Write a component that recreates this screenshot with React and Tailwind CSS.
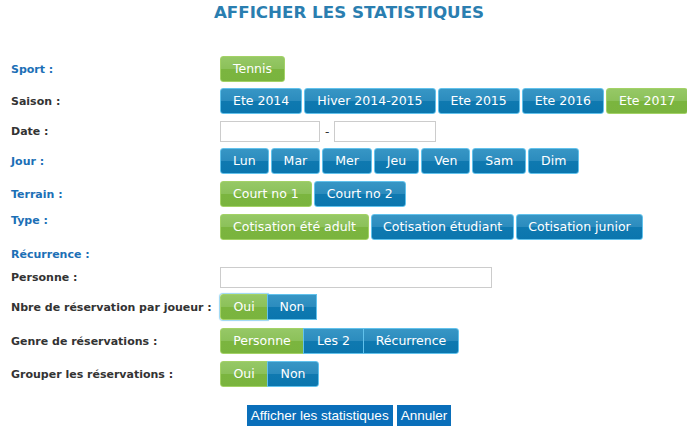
import clsx from 'clsx';
import { twMerge } from 'tailwind-merge';

const blue =
  'border-[#62c2ec] bg-[linear-gradient(to_bottom,#3796c5_0%,#2c8cbe_48%,#0f79b0_52%,#0b76ae_100%)]';
const green =
  'border-[#a3d266] bg-[linear-gradient(to_bottom,#96c866_0%,#8cc15a_48%,#7bb53f_52%,#7ab43e_100%)]';

const Btn = ({ children, active, className }) => (
  <button
    className={twMerge(
      clsx(
        'h-[26px] border px-[12px] text-[12.5px] leading-none text-white whitespace-nowrap',
        active ? green : blue,
        className
      )
    )}
  >
    {children}
  </button>
);

const Row = ({ label, accent, top, className, children }) => (
  <div className={clsx('flex', top ? 'items-start' : 'items-center', className)}>
    <div
      className={clsx(
        'w-[209px] shrink-0 text-[11px] font-bold leading-[13px]',
        accent ? 'text-[#1c6fb6]' : 'text-[#333333]'
      )}
    >
      {label}
    </div>
    <div className="flex items-center">{children}</div>
  </div>
);

const Field = ({ className }) => (
  <input type="text" className={clsx('h-[21px] border border-[#cccccc] bg-white', className)} />
);

export default function App() {
  const saisons = ['Ete 2014', 'Hiver 2014-2015', 'Ete 2015', 'Ete 2016', 'Ete 2017'];
  const jours = ['Lun', 'Mar', 'Mer', 'Jeu', 'Ven', 'Sam', 'Dim'];

  return (
    <div className="w-[687px] h-[433px] bg-white pl-[11px] font-['DejaVu_Sans',Verdana,sans-serif]">
      <h1 className="pt-[3px] text-center text-[16.7px] font-bold leading-[19px] text-[#2a7eb0]">
        AFFICHER LES STATISTIQUES
      </h1>

      <Row label="Sport :" accent className="mt-[34px]">
        <Btn active className="rounded-[3px]">Tennis</Btn>
      </Row>

      <Row label="Saison :" className="mt-[6px]">
        <div className="flex gap-[2px]">
          {saisons.map((s, i) => (
            <Btn key={s} active={i === 4} className="rounded-[3px]">
              {s}
            </Btn>
          ))}
        </div>
      </Row>

      <Row label="Date :" className="mt-[7px]">
        <Field className="w-[100px]" />
        <span className="mx-[5px] text-[12px] text-[#333]">-</span>
        <Field className="w-[102px]" />
      </Row>

      <Row label="Jour :" accent className="mt-[6px]">
        <div className="flex gap-[2px]">
          {jours.map((j) => (
            <Btn key={j} className="rounded-[3px]">
              {j}
            </Btn>
          ))}
        </div>
      </Row>

      <Row label="Terrain :" accent className="mt-[7px]">
        <div className="flex gap-[2px]">
          <Btn active className="rounded-[3px]">Court no 1</Btn>
          <Btn className="rounded-[3px]">Court no 2</Btn>
        </div>
      </Row>

      <Row label="Type :" accent top className="mt-[7px]">
        <div className="flex gap-[2px]">
          <Btn active className="rounded-[3px]">Cotisation été adult</Btn>
          <Btn className="rounded-[3px] px-[11px]">Cotisation étudiant</Btn>
          <Btn className="rounded-[3px] px-[11px]">Cotisation junior</Btn>
        </div>
      </Row>

      <Row label="Récurrence :" accent className="mt-[7px] h-[14px]" />

      <Row label="Personne :" className="mt-[6px]">
        <Field className="w-[272px]" />
      </Row>

      <Row label="Nbre de réservation par joueur :" className="mt-[6px]">
        <Btn active className="rounded-l-[3px] w-[48px] px-0 shadow-[0_0_1px_1px_#9ad6f2]">Oui</Btn>
        <Btn className="w-[50px] px-0 -ml-px">Non</Btn>
      </Row>

      <Row label="Genre de réservations :" className="mt-[8px]">
        <Btn active className="rounded-l-[3px] w-[84px] px-0">Personne</Btn>
        <Btn className="-ml-px w-[61px] px-0">Les 2</Btn>
        <Btn className="-ml-px rounded-r-[3px] w-[96px] px-0">Récurrence</Btn>
      </Row>

      <Row label="Grouper les réservations :" className="mt-[7px]">
        <Btn active className="rounded-l-[3px] w-[48px] px-0">Oui</Btn>
        <Btn className="-ml-px rounded-r-[3px] w-[52px] px-0">Non</Btn>
      </Row>

      <div className="mt-[18px] flex justify-center gap-[4px] font-['Liberation_Sans',Arial,sans-serif]">
        <button className="h-[21px] bg-[#0a6fba] px-[4px] text-[13.5px] leading-none text-white">
          Afficher les statistiques
        </button>
        <button className="h-[21px] bg-[#0a6fba] px-[4px] text-[13.5px] leading-none text-white">
          Annuler
        </button>
      </div>
    </div>
  );
}
